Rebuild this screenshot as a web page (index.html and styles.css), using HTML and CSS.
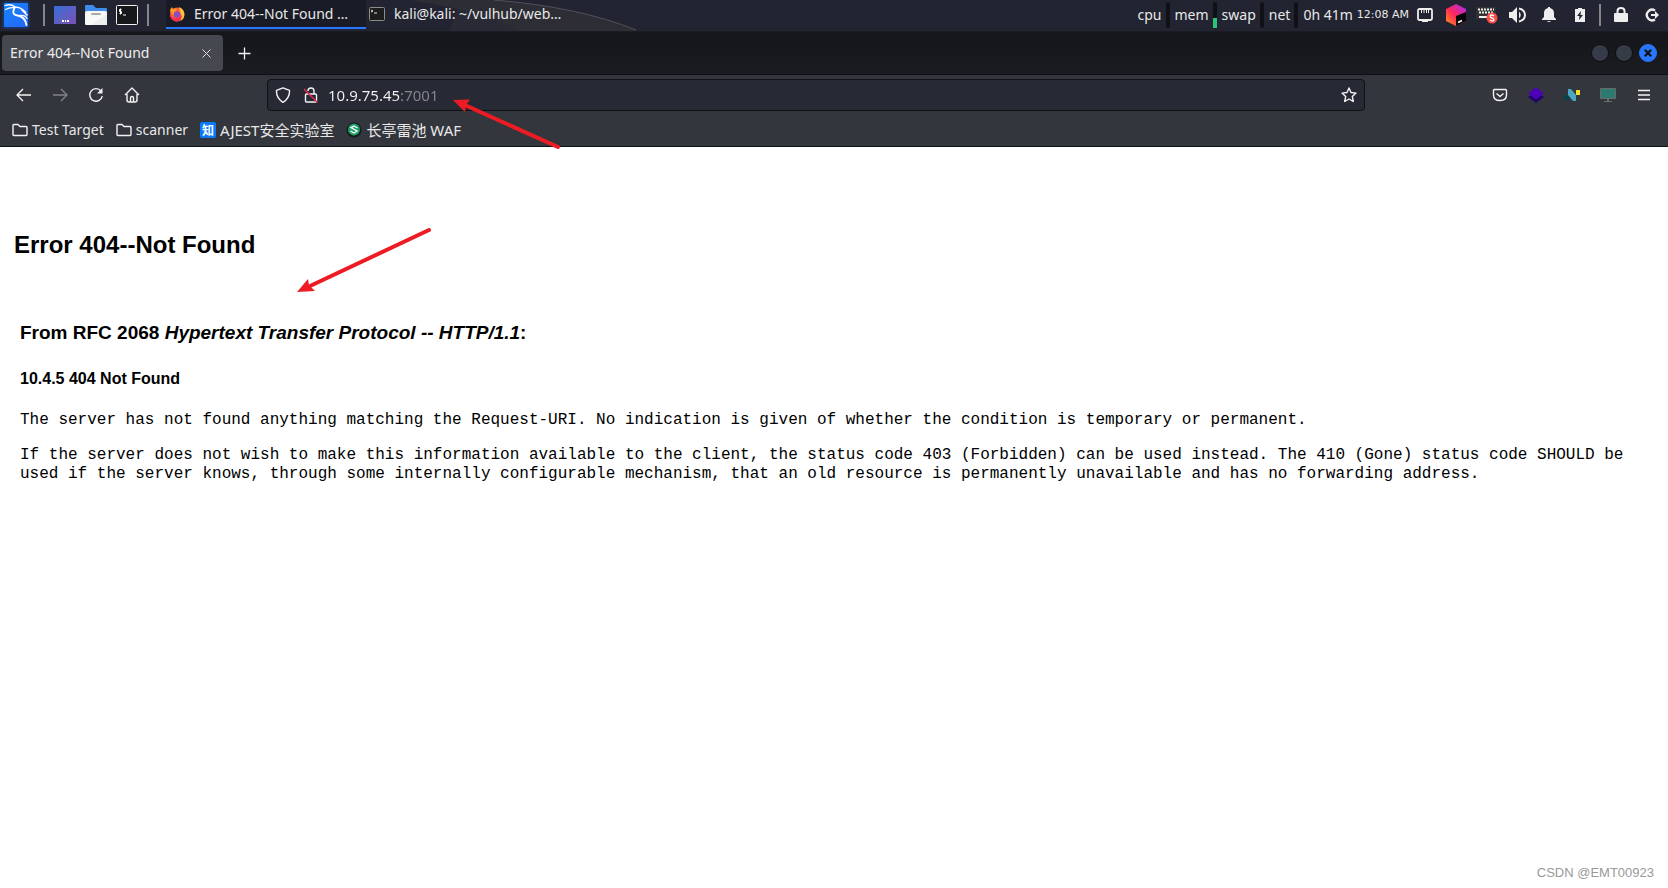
FILE: index.html
```html
<!DOCTYPE html>
<html lang="en">
<head>
<meta charset="utf-8">
<title>Error 404--Not Found</title>
<link rel="stylesheet" href="styles.css">
</head>
<body>
<header class="panel">
  <svg class="panel-art" viewBox="0 0 660 31" aria-hidden="true">
    <path d="M460 0h37q90 7 140 31H450z" fill="#292a35"/>
    <path d="M520 31q-30-18-110-31h80q90 8 147 31z" fill="#2d2d35"/>
    <path d="M494 0q85 7 142 30" fill="none" stroke="#50515a"/>
  </svg>
  <div class="launchers">
    <button class="icon-button kali" aria-label="Applications menu">
      <svg width="32" height="30" viewBox="0 0 32 30"><defs><linearGradient id="kg" x2="1" y2="1"><stop stop-color="#1686ff"/><stop offset="1" stop-color="#2665f5"/></linearGradient></defs>
      <rect x="2" y="1" width="28" height="28" rx="4" fill="#173f82" opacity=".6"/><rect x="4" y="3" width="24" height="24" rx="1" fill="url(#kg)"/>
      <g fill="none" stroke="#fff" stroke-linecap="round"><path d="M5 5.500q6-2 10 1.500" stroke-width="1.300"/><path d="M5.500 9.500q5-2.500 9-1.500" stroke-width="1.300"/><path d="M14.500 7q5 0 8 2.500l3 2.500M22 10l5 5" stroke-width="1.600"/><path d="M14.500 8q-3.500 6.500 3 7.500 7.500 1 9 9.500" stroke-width="1.800"/><path d="M20 15.500q5.500-.5 7 3" stroke-width="1.300"/></g></svg>
    </button>
    <span class="divider"></span>
    <button class="icon-button" aria-label="Show desktop"><svg width="22" height="18" viewBox="0 0 22 18"><defs><linearGradient id="dg" x2="1" y2="1"><stop stop-color="#3470da"/><stop offset=".5" stop-color="#5c60c4"/><stop offset="1" stop-color="#7950b6"/></linearGradient></defs><path fill="url(#dg)" d="M0 0h22v18H0z"/><path d="M8 14h2v2H8zM11 14h1v2h-1zM13 14h2v2h-2z" fill="#fff"/></svg></button>
    <button class="icon-button" aria-label="Files"><svg width="22" height="20" viewBox="0 0 22 20"><path d="M0 1Q0 0 1 0h7l3 3h10q1 0 1 1v5H0z" fill="#3e8bea"/><path d="M0 8q0-2 2-2h18q2 0 2 2v11q0 1-1 1H1q-1 0-1-1z" fill="#f8f8f8"/><path d="M22 9v11H6z" fill="#eee"/><rect x="6" y="8" width="10" height="2" rx="1" fill="#aaa"/></svg></button>
    <button class="icon-button" aria-label="Terminal"><svg width="22" height="20" viewBox="0 0 22 20"><rect x=".5" y=".5" width="21" height="19" rx="1" fill="#171819" stroke="#f0f0f0"/><path d="M5.500 4.500h-2v2h2v2h-2M4.500 3.500v6M7 10h3" fill="none" stroke="#fff"/></svg></button>
    <span class="divider"></span>
  </div>
  <nav class="tasks" aria-label="Open windows">
    <button class="task task-active"><svg width="16" height="16" viewBox="0 0 16 16"><circle cx="8" cy="8.500" r="7" fill="#ff5a36"/><path d="M10 1q5 2 5.500 7 0 5-4 7 2-4 0-8z" fill="#ffc43b"/><path d="M1 5q0-2 2-4l1 2q2-1 4 0L6 5q4 0 4 4-2 3-5 1-2-2-4-5z" fill="#ff9a22"/><circle cx="8" cy="8.500" r="3.300" fill="#8c4bc4"/><path d="M1 8q2 5 7 4 3 0 5-3-1 7-6 6.500Q1 14 1 8" fill="#f42e4f"/></svg><span>Error 404--Not Found …</span></button>
    <button class="task"><svg width="16" height="14" viewBox="0 0 16 14"><rect x=".5" y=".5" width="15" height="13" rx="1" fill="#1c1d1c" stroke="#8d8e8b"/><path d="M2 3l2 1-2 1M5 6h3" fill="none" stroke="#ddd"/></svg><span>kali@kali: ~/vulhub/web…</span></button>
  </nav>
  <div class="monitors">
    <span>cpu</span><i class="gauge"></i><span>mem</span><i class="gauge"><b class="gauge-fill"></b></i><span>swap</span><i class="gauge"></i><span>net</span><i class="gauge"></i><span>0h 41m</span><time class="clock">12:08 AM</time>
  </div>
  <div class="tray">
    <button class="icon-button" aria-label="Network"><svg width="16" height="14" viewBox="0 0 16 14"><rect x="1" y="1" width="14" height="11" rx="1.500" fill="none" stroke="#eee" stroke-width="1.800"/><path d="M4.500 2v3M7 2v3M9.500 2v3M11.500 2v3" stroke="#eee"/><path d="M5 12h6v2H5z" fill="#eee"/></svg></button>
    <button class="icon-button" aria-label="Toolbox"><svg width="20" height="22" viewBox="0 0 20 22"><defs><linearGradient id="jb" x1="0" y1="1" x2="1" y2="0"><stop stop-color="#ff9b18"/><stop offset=".45" stop-color="#ff2857"/><stop offset="1" stop-color="#a72cff"/></linearGradient></defs><path d="M10 0l10 5v12l-10 5L0 17V5z" fill="url(#jb)"/><path d="M10 12l10-4v9l-10 5z" fill="#050505"/><path d="M12 18.500l4-2" stroke="#fff" stroke-width="1.500"/></svg></button>
    <button class="icon-button" aria-label="Input method"><svg width="22" height="18" viewBox="0 0 22 18"><path d="M0 1h20v12H0z" fill="#323232"/><path d="M2 3.500h16M3 6.500h14" stroke="#eee" stroke-width="2" stroke-dasharray="2 1"/><path d="M3 10h10v2H3z" fill="#eee"/><circle cx="16" cy="12" r="5.500" fill="#fc4a45"/><path d="M18 10q-3-2-4 0 0 1.500 2 2t2 2q-1 2-4 0" fill="none" stroke="#fff" stroke-width="1.300"/></svg></button>
    <button class="icon-button" aria-label="Volume"><svg width="18" height="16" viewBox="0 0 18 16"><path d="M0 5h3l5-5v16l-5-5H0z" fill="#eee"/><path d="M10 4.500q3.500 3.500 0 7z" fill="#eee"/><path d="M10 1.500q6 1.500 6 6.500t-6 6.500" fill="none" stroke="#eee" stroke-width="2"/></svg></button>
    <button class="icon-button" aria-label="Notifications"><svg width="14" height="15" viewBox="0 0 14 15"><path d="M6 0h2v1q4 1 4 5v4l2 2v1H0v-1l2-2V6q0-4 4-5zM5 14h4q-2 2-4 0" fill="#eee"/></svg></button>
    <button class="icon-button" aria-label="Battery"><svg width="10" height="14" viewBox="0 0 10 14"><path d="M3 0h4v1h3v13H0V1h3z" fill="#eee"/><path d="M6 3L2 8h2.500L4 12l4-5H5.500z" fill="#222431"/></svg></button>
    <span class="divider"></span>
    <button class="icon-button" aria-label="Lock screen"><svg width="14" height="15" viewBox="0 0 14 15"><rect y="6" width="14" height="9" rx="1" fill="#eee"/><path d="M3.500 7V4q0-3 3.500-3t3.500 3v3" fill="none" stroke="#eee" stroke-width="2"/></svg></button>
    <button class="icon-button" aria-label="Log out"><svg width="14" height="14" viewBox="0 0 14 14"><path d="M10 2.500a5.300 5.300 0 1 0 0 9" fill="none" stroke="#eee" stroke-width="2.300"/><path d="M6 6h4V3l4 4-4 4V8H6z" fill="#eee"/></svg></button>
  </div>
</header>

<div class="tabbar">
  <div class="tab"><span>Error 404--Not Found</span><button class="icon-button" aria-label="Close tab"><svg width="9" height="9" viewBox="0 0 9 9"><path d="M.5.5l8 8m0-8l-8 8" stroke="#ddd"/></svg></button></div>
  <button class="icon-button new-tab" aria-label="New tab"><svg width="13" height="13" viewBox="0 0 13 13"><path d="M6.500.5v12M.5 6.500h12" stroke="#f3f3f3" stroke-width="1.300"/></svg></button>
  <div class="window-buttons"><button class="window-button" aria-label="Minimize"></button><button class="window-button" aria-label="Maximize"></button><button class="window-button window-close" aria-label="Close window"><svg width="8" height="8" viewBox="0 0 8 8"><path d="M.8.8l6.400 6.400m0-6.400L.8 7.200" stroke="#111" stroke-width="2.200"/></svg></button></div>
</div>

<div class="toolbar">
  <div class="nav-buttons">
    <button class="icon-button" aria-label="Back"><svg width="16" height="16" viewBox="0 0 16 16"><path d="M15 8H1.500M7 2L1 8l6 6" class="line"/></svg></button>
    <button class="icon-button dim" aria-label="Forward"><svg width="16" height="16" viewBox="0 0 16 16"><path d="M1 8h13.500M9 2l6 6-6 6" class="line"/></svg></button>
    <button class="icon-button" aria-label="Reload"><svg width="16" height="16" viewBox="0 0 16 16"><path d="M13 4A6.300 6.300 0 1 0 14.300 9" class="line"/><path d="M14.500 1v5.500H9z" fill="#f3f3f3"/></svg></button>
    <button class="icon-button" aria-label="Home"><svg width="16" height="16" viewBox="0 0 16 16"><path d="M1 8l7-7 7 7M3 7v6q0 2 2 2h6q2 0 2-2V7M6.500 15v-4q0-1.500 1.500-1.500t1.500 1.500v4" class="line"/></svg></button>
  </div>
  <div class="urlbar">
    <svg width="16" height="16" viewBox="0 0 16 16"><path d="M8 .8l6.500 2.500q.5 8-6.500 12Q1 11 1.500 3.300z" class="line"/></svg>
    <svg width="16" height="16" viewBox="0 0 16 16"><path d="M3.500 7h9q1 0 1 1v6q0 1-1 1h-9q-1 0-1-1V8q0-1 1-1zM5 4q0-3 3-3t3 3v3" class="line"/><path d="M1 2l13.500 13.500" stroke="#e22850" stroke-width="1.500"/></svg>
    <input class="url" type="text" aria-label="Address" value="10.9.75.45:7001">
    <button class="icon-button" aria-label="Bookmark this page"><svg width="16" height="16" viewBox="0 0 16 16"><path d="M8 1l2 4.500 5 .6-3.700 3.400 1 5L8 12l-4.300 2.500 1-5L1 6.100l5-.6z" class="line"/></svg></button>
  </div>
  <div class="extensions">
    <button class="icon-button" aria-label="Save to Pocket"><svg width="16" height="16" viewBox="0 0 16 16"><path d="M2.500 2.500h11q1 0 1 1V8q0 5.500-6.500 5.500T1.500 8V3.500q0-1 1-1zM4.500 6.500L8 9.500l3.500-3" class="line"/></svg></button>
    <button class="icon-button" aria-label="Layers extension"><svg width="16" height="16" viewBox="0 0 16 16"><path d="M8 5l8 5-8 6-8-6z" fill="#200568"/><path d="M8 0l8 6.500-8 6-8-6z" fill="#4c02b5"/></svg></button>
    <button class="icon-button" aria-label="Netcraft extension"><svg width="16" height="16" viewBox="0 0 16 16"><rect y="8" width="5" height="5" rx="1" fill="#064452"/><path d="M4 2h3l5 6v6H9L4 8z" fill="#4aa6c3"/><path d="M12 3h4v5h-4z" fill="#f1df28"/></svg></button>
    <button class="icon-button" aria-label="Monitor extension"><svg width="16" height="16" viewBox="0 0 16 16"><path d="M.5 1.500h15v10H.5z" fill="#2d7a71" stroke="#68696b"/><path d="M7 12h2v2h3v1H4v-1h3z" fill="#68696b"/></svg></button>
    <button class="icon-button" aria-label="Open menu"><svg width="16" height="16" viewBox="0 0 16 16"><path d="M2 3.500h12M2 8h12M2 12.500h12" class="line"/></svg></button>
  </div>
</div>

<nav class="bookmarks" aria-label="Bookmarks">
  <a href="#"><svg width="16" height="16" viewBox="0 0 16 16"><path d="M1 12.500v-9q0-1 1-1h4l2 2h6q1 0 1 1v7q0 1-1 1H2q-1 0-1-1z" class="line"/></svg>Test Target</a>
  <a href="#"><svg width="16" height="16" viewBox="0 0 16 16"><path d="M1 12.500v-9q0-1 1-1h4l2 2h6q1 0 1 1v7q0 1-1 1H2q-1 0-1-1z" class="line"/></svg>scanner</a>
  <a href="#" class="bookmark-cjk"><span class="zhihu">知</span>AJEST安全实验室</a>
  <a href="#" class="bookmark-cjk"><svg width="16" height="16" viewBox="0 0 16 16"><circle cx="8" cy="8" r="7.500" fill="#151a1b"/><circle cx="8" cy="7.500" r="6" fill="#1b9d65"/><path d="M11.500 6L8 4 5 5.500l6 3.500-3 2-3.500-2" fill="none" stroke="#fff" stroke-width="1.400"/></svg>长亭雷池 WAF</a>
</nav>

<main class="page">
  <h1>Error 404--Not Found</h1>
  <article class="details">
    <h2>From RFC 2068 <em>Hypertext Transfer Protocol -- HTTP/1.1</em>:</h2>
    <h3>10.4.5 404 Not Found</h3>
    <p>The server has not found anything matching the Request-URI. No indication is given of whether the condition is temporary or permanent.</p>
    <p>If the server does not wish to make this information available to the client, the status code 403 (Forbidden) can be used instead. The 410 (Gone) status code SHOULD be used if the server knows, through some internally configurable mechanism, that an old resource is permanently unavailable and has no forwarding address.</p>
  </article>
  <footer class="watermark">CSDN @EMT00923</footer>
</main>

<svg class="arrow arrow-address" width="110" height="54" viewBox="0 0 110 54" aria-hidden="true"><path d="M14 10l91 41" stroke="#ed1c24" stroke-width="4" stroke-linecap="round"/><path d="M0 4l17-.5-4 5.500-1 7z" fill="#ed1c24"/></svg>
<svg class="arrow arrow-details" width="136" height="68" viewBox="0 0 136 68" aria-hidden="true"><path d="M12 61L131 5" stroke="#ed1c24" stroke-width="4" stroke-linecap="round"/><path d="M-1 67l11-13 1 6 6 6z" fill="#ed1c24"/></svg>
</body>
</html>
```
FILE: styles.css
```css
* { box-sizing: border-box; }

body {
  display: flex;
  flex-direction: column;
  position: relative;
  min-height: 100vh;
  margin: 0;
  background: #fff;
  color: #000;
  font: 14px/20px "Noto Sans", "Noto Sans CJK SC", sans-serif;
}

svg { display: block; flex: none; }
.line { fill: none; stroke: #f3f3f3; stroke-width: 1.4; stroke-linejoin: round; }

button {
  margin: 0;
  padding: 0;
  border: 0;
  background: none;
  color: inherit;
  font: inherit;
}

.icon-button { display: flex; flex: none; align-items: center; justify-content: center; }
.dim { opacity: 0.4; }

/* Desktop panel */
.panel {
  display: flex;
  position: relative;
  align-items: center;
  height: 32px;
  padding-bottom: 2px;
  border-bottom: 1px solid #1b1c22;
  background: #222431;
  color: #e8e8e8;
}
.panel-art { position: absolute; top: 0; left: 0; width: 660px; height: 31px; }
.launchers { display: flex; position: relative; align-items: center; gap: 9px; width: 166px; }
.kali { width: 34px; justify-content: flex-start; }
.divider { flex: none; width: 2px; height: 22px; background: #85868b; }
.tasks { display: flex; position: relative; flex: 1; align-self: stretch; }
.task { display: flex; align-items: center; gap: 9px; width: 200px; padding: 0 3px; border-bottom: 2px solid transparent; white-space: nowrap; }
.task-active { border-bottom-color: #2777ff; background: #191b26; }
.monitors { display: flex; align-items: center; }
.gauge { display: flex; align-items: flex-end; width: 4px; height: 26px; margin: 0 5px 0 4px; border-radius: 2px; background: #101116; }
.gauge-fill { width: 4px; height: 10px; background: #2cc27c; }
.clock { margin-left: 4px; font: 11px/20px "DejaVu Sans", sans-serif; }
.tray { display: flex; align-items: center; margin-right: 1px; }
.tray .icon-button { width: 31px; }
.tray .divider { margin: 0 4px; }

/* Browser tabs */
.tabbar { display: flex; align-items: center; height: 43px; padding: 0 11px 0 2px; border-bottom: 1px solid #0e0f12; background: linear-gradient(#15161a, #1b1c21); color: #eee; }
.tab { display: flex; align-items: center; justify-content: space-between; width: 221px; height: 36px; padding: 0 12px 0 8px; border-radius: 4px; background: #46484f; }
.new-tab { margin-left: 15px; }
.window-buttons { display: flex; gap: 6px; margin-left: auto; }
.window-button { display: flex; align-items: center; justify-content: center; width: 18px; height: 18px; border: 1px solid #0c0d10; border-radius: 50%; background: #363b48; }
.window-close { border-color: #2777ff; background: #2777ff; }

/* Navigation toolbar */
.toolbar { display: flex; align-items: center; height: 40px; background: #33363d; }
.nav-buttons { display: flex; gap: 20px; width: 267px; padding-left: 16px; }
.urlbar { display: flex; flex: 1; align-items: center; gap: 12px; height: 32px; padding: 0 7px; border: 1px solid #0f1115; border-radius: 4px; background: #272a35; }
.url {
  flex: 1;
  min-width: 0;
  margin-left: -3px;
  padding: 0;
  border: 0;
  outline: 0;
  background: linear-gradient(90deg, #f5f5f5 72px, #85868d 72px);
  background-clip: text;
  color: transparent;
  font: inherit;
  font-size: 15px;
}
.extensions { display: flex; justify-content: flex-end; gap: 20px; width: 303px; padding-right: 16px; }

/* Bookmarks */
.bookmarks { display: flex; align-items: center; gap: 12px; height: 32px; padding: 0 12px 1px; border-bottom: 1px solid #0f1013; background: #33363d; }
.bookmarks a { display: flex; align-items: center; gap: 4px; color: #e8e8e8; text-decoration: none; }
.bookmarks .bookmark-cjk { font-size: 15px; }
.zhihu { width: 16px; height: 16px; border-radius: 2px; background: #0a7aff; color: #fff; font: bold 12px/16px "Noto Sans CJK SC", sans-serif; text-align: center; }

/* Page */
.page { display: flex; flex: 1; flex-direction: column; padding: 84px 14px 5px; font-family: "Liberation Sans", Arial, sans-serif; }
h1, h2, h3, p { margin: 0; }
h1 { font-size: 24px; line-height: 28px; }
.details { padding: 63px 6px 0; }
h2 { font-size: 19px; line-height: 22px; }
h3 { margin-top: 26px; font-size: 16px; line-height: 18px; }
p { margin-top: 16px; font: 16px/19px "Liberation Mono", "Courier New", monospace; }
h3 + p { margin-top: 23px; }
.watermark { margin-top: auto; color: #999; font-size: 13px; text-align: right; }

/* Pointer annotations */
.arrow { position: absolute; overflow: visible; pointer-events: none; }
.arrow-address { top: 96px; left: 453px; }
.arrow-details { top: 225px; left: 298px; }
```
